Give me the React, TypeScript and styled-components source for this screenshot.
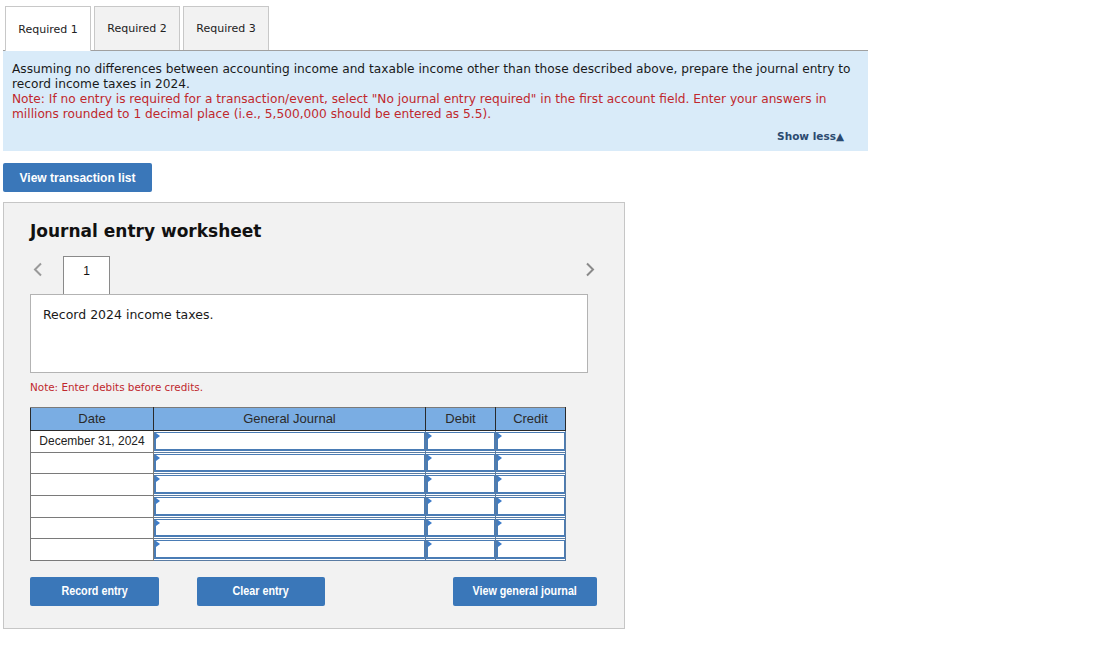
import React from "react";
import styled, { createGlobalStyle } from "styled-components";

const GlobalStyle = createGlobalStyle`
  html, body {
    margin: 0;
    padding: 0;
    background: #ffffff;
  }
  body {
    font-family: "DejaVu Sans", Verdana, sans-serif;
    color: #1a1a1a;
  }
`;

const Page = styled.div`
  width: 865px;
  padding: 6px 0 0 3px;
`;

const TabBar = styled.div`
  display: flex;
  gap: 3px;
  padding-left: 2px;
  border-bottom: 1px solid #a0a0a0;
`;

const Tab = styled.div<{ active?: boolean }>`
  width: 84px;
  display: flex;
  align-items: center;
  justify-content: center;
  font-size: 11px;
  color: #222;
  background: ${(p) => (p.active ? "#ffffff" : "#f2f2f2")};
  border: 1px solid #c8c8c8;
  border-bottom: none;
  margin-bottom: ${(p) => (p.active ? "-1px" : "0")};
  height: ${(p) => (p.active ? "44px" : "43px")};
`;

const InfoBox = styled.div`
  background: #d9ebf9;
  height: 100px;
  box-sizing: border-box;
  padding: 11px 8px 0 9px;
  font-size: 12.2px;
  line-height: 15px;
`;

const NoteText = styled.p`
  margin: 0;
  color: #c0282d;
`;

const InfoText = styled.p`
  margin: 0;
`;

const ShowLess = styled.div`
  text-align: right;
  margin-top: 7px;
  padding-right: 16px;
  font-size: 10.5px;
  font-weight: bold;
  color: #2b4a70;
`;

const BlueButton = styled.button<{ width: number }>`
  width: ${(p) => p.width}px;
  height: 29px;
  border: none;
  border-radius: 2px;
  background: #3a77b9;
  color: #ffffff;
  font-family: "Liberation Sans", Arial, sans-serif;
  font-weight: bold;
  font-size: 12px;
  cursor: pointer;
  padding: 0;
`;

const NarrowLabel = styled.span`
  display: inline-block;
  font-size: 12.5px;
  transform: scaleX(0.86);
`;

const TopButtonRow = styled.div`
  margin-top: 12px;
`;

const Worksheet = styled.div`
  margin-top: 10px;
  width: 622px;
  box-sizing: border-box;
  border: 1px solid #c6c6c6;
  background: #f2f2f2;
  padding: 16px 0 22px 26px;
`;

const Title = styled.h2`
  margin: 0;
  font-size: 17px;
  line-height: 24px;
  font-weight: bold;
  color: #111;
`;

const NavRow = styled.div`
  margin-top: 13px;
  width: 566px;
  height: 38px;
  display: flex;
  align-items: flex-start;
`;

const Chevron = styled.div<{ right?: boolean }>`
  width: 33px;
  height: 38px;
  padding-top: 6px;
  box-sizing: border-box;
  display: flex;
  justify-content: ${(p) => (p.right ? "flex-end" : "flex-start")};
  padding-left: ${(p) => (p.right ? "0" : "3px")};
  padding-right: ${(p) => (p.right ? "1px" : "0")};
  margin-left: ${(p) => (p.right ? "auto" : "0")};
`;

const EntryTab = styled.div`
  width: 47px;
  height: 38px;
  box-sizing: border-box;
  border: 1px solid #8a8a8a;
  border-bottom: none;
  background: #ffffff;
  padding-top: 7px;
  text-align: center;
  font-family: "Liberation Sans", Arial, sans-serif;
  font-size: 12px;
  line-height: 14px;
  color: #111;
`;

const Description = styled.div`
  width: 558px;
  height: 79px;
  box-sizing: border-box;
  border: 1px solid #b3b3b3;
  background: #ffffff;
  padding: 12px 12px;
  font-size: 12.5px;
  line-height: 16px;
`;

const SmallNote = styled.div`
  margin-top: 8px;
  font-size: 10.4px;
  color: #c0282d;
`;

const Table = styled.table`
  margin-top: 14px;
  width: 535px;
  table-layout: fixed;
  border-collapse: collapse;
  font-family: "Liberation Sans", Arial, sans-serif;
  font-size: 12px;
  border: 1px solid #7a7a7a;
`;

const HeadCell = styled.th<{ w: number }>`
  width: ${(p) => p.w}px;
  height: 21px;
  padding: 0 0 1px;
  background: #7aade3;
  font-weight: normal;
  font-size: 13px;
  color: #2a2a2a;
  border: 1px solid #2a2a2a;
  border-top-color: #7a7a7a;
`;

const DateCell = styled.td`
  height: 20.67px;
  padding: 0;
  text-align: center;
  color: #222;
  background: #ffffff;
  border: 1px solid #7a7a7a;
`;

const InputCell = styled.td`
  height: 20.67px;
  padding: 0;
  border: 1px solid #5a7ca3;
  background: #ffffff;
`;

const Field = styled.div`
  position: relative;
  height: 18.67px;
  box-sizing: border-box;
  border: 1px solid #4a7cb5;
  border-left-width: 2px;
  border-bottom-width: 2px;
  background: #ffffff;
  &::before {
    content: "";
    position: absolute;
    top: 0;
    left: 0;
    border-top: 3px solid transparent;
    border-bottom: 3px solid transparent;
    border-left: 4px solid #3d7cc9;
  }
`;

const BottomRow = styled.div`
  margin-top: 16px;
  display: flex;
  width: 567px;
`;

const Spacer = styled.div<{ w: number }>`
  width: ${(p) => p.w}px;
  flex-shrink: 0;
`;

const ChevronIcon = ({ dir }: { dir: "left" | "right" }) => (
  <svg width="10" height="15" viewBox="0 0 10 15">
    <polyline
      points={dir === "left" ? "8,1.5 2,7.5 8,13.5" : "2,1.5 8,7.5 2,13.5"}
      fill="none"
      stroke={dir === "left" ? "#9a9a9a" : "#8a8a8a"}
      strokeWidth="2"
    />
  </svg>
);

const rows = ["December 31, 2024", "", "", "", "", ""];

export default function App() {
  return (
    <>
      <GlobalStyle />
      <Page>
        <TabBar>
          <Tab active>Required 1</Tab>
          <Tab>Required 2</Tab>
          <Tab>Required 3</Tab>
        </TabBar>
        <InfoBox>
          <InfoText>
            Assuming no differences between accounting income and taxable income other than
            those described above, prepare the journal entry to record income taxes in 2024.
          </InfoText>
          <NoteText>
            Note: If no entry is required for a transaction/event, select "No journal entry
            required" in the first account field. Enter your answers in millions rounded to 1
            decimal place (i.e., 5,500,000 should be entered as 5.5).
          </NoteText>
          <ShowLess>Show less▲</ShowLess>
        </InfoBox>
        <TopButtonRow>
          <BlueButton width={149}>View transaction list</BlueButton>
        </TopButtonRow>
        <Worksheet>
          <Title>Journal entry worksheet</Title>
          <NavRow>
            <Chevron>
              <ChevronIcon dir="left" />
            </Chevron>
            <EntryTab>1</EntryTab>
            <Chevron right>
              <ChevronIcon dir="right" />
            </Chevron>
          </NavRow>
          <Description>Record 2024 income taxes.</Description>
          <SmallNote>Note: Enter debits before credits.</SmallNote>
          <Table>
            <thead>
              <tr>
                <HeadCell w={122}>Date</HeadCell>
                <HeadCell w={271}>General Journal</HeadCell>
                <HeadCell w={69}>Debit</HeadCell>
                <HeadCell w={69}>Credit</HeadCell>
              </tr>
            </thead>
            <tbody>
              {rows.map((d, i) => (
                <tr key={i}>
                  <DateCell>{d}</DateCell>
                  <InputCell>
                    <Field />
                  </InputCell>
                  <InputCell>
                    <Field />
                  </InputCell>
                  <InputCell>
                    <Field />
                  </InputCell>
                </tr>
              ))}
            </tbody>
          </Table>
          <BottomRow>
            <BlueButton width={129}>
              <NarrowLabel>Record entry</NarrowLabel>
            </BlueButton>
            <Spacer w={38} />
            <BlueButton width={128}>
              <NarrowLabel>Clear entry</NarrowLabel>
            </BlueButton>
            <Spacer w={128} />
            <BlueButton width={144}>
              <NarrowLabel>View general journal</NarrowLabel>
            </BlueButton>
          </BottomRow>
        </Worksheet>
      </Page>
    </>
  );
}
